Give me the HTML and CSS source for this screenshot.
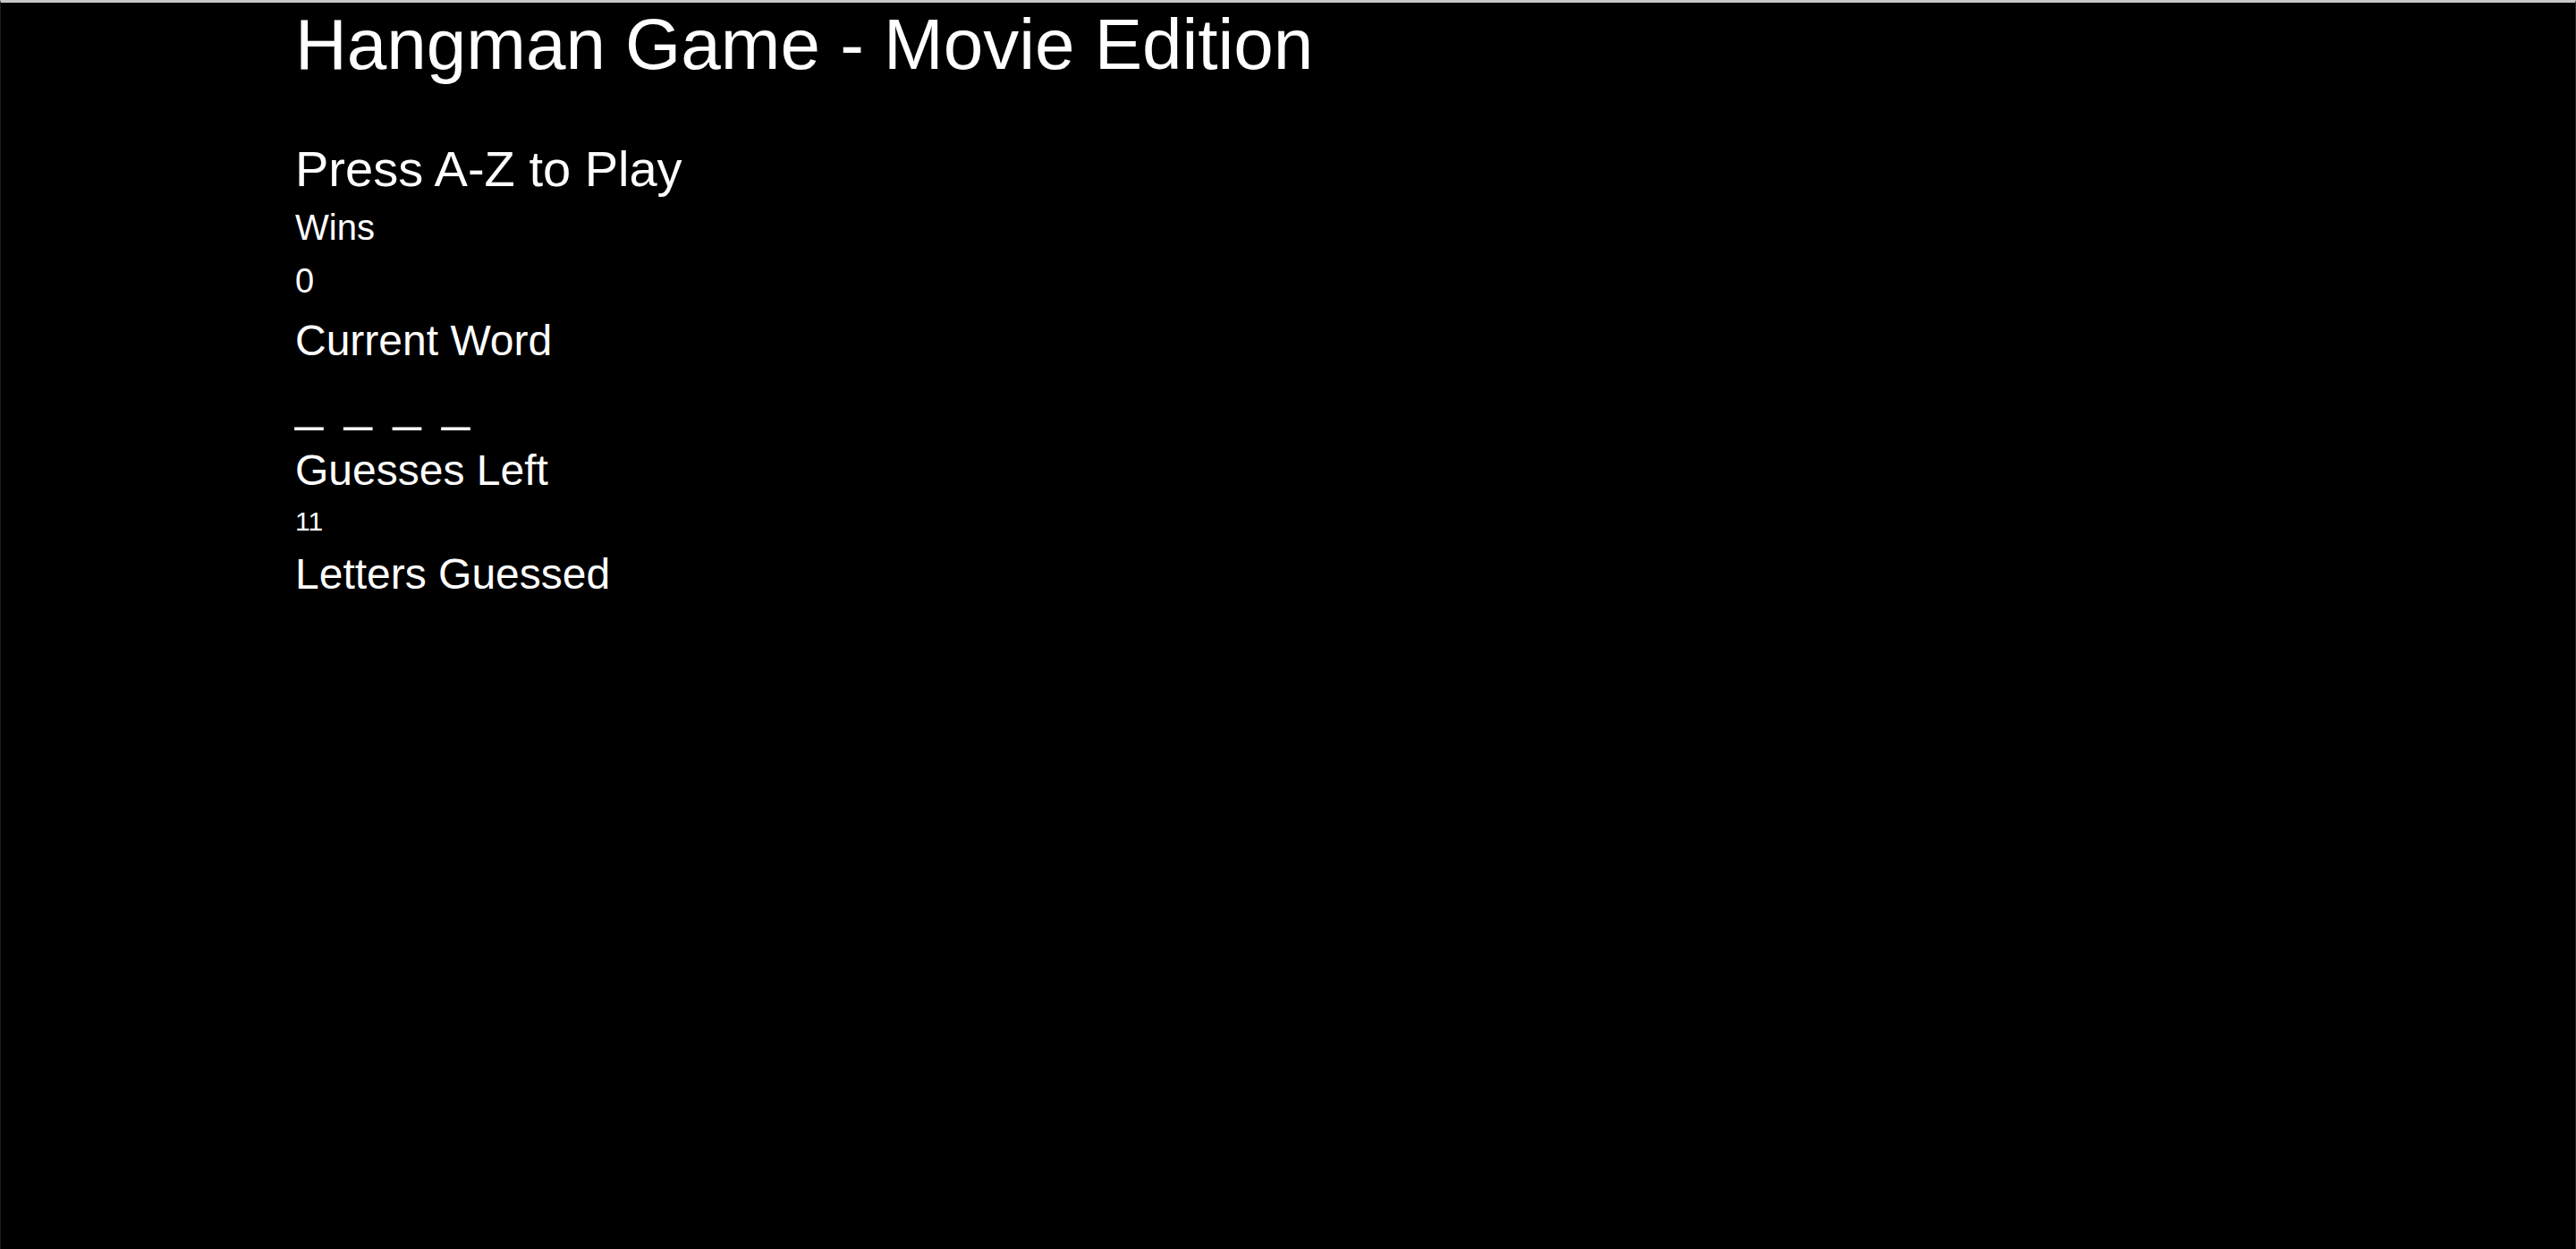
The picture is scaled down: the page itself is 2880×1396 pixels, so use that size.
FILE: index.html
```html
<!DOCTYPE html>
<html lang="en">
<head>
<meta charset="utf-8">
<title>Hangman Game - Movie Edition</title>
<link rel="stylesheet" href="styles.css">
</head>
<body>
  <main class="game">
    <h1 class="title">Hangman Game - Movie Edition</h1>
    <h2 class="prompt">Press A-Z to Play</h2>
    <div class="label-sm">Wins</div>
    <div class="value-wins">0</div>
    <h3 class="label label-current">Current Word</h3>
    <div class="word">_ _ _ _</div>
    <h3 class="label label-guesses">Guesses Left</h3>
    <div class="value-left">11</div>
    <h3 class="label label-letters">Letters Guessed</h3>
  </main>
</body>
</html>
```

FILE: styles.css
```css
html, body {
  height: 100%;
}
body {
  margin: 0;
  background: #000;
  color: #fff;
  font-family: "Liberation Sans", Arial, Helvetica, sans-serif;
  border-top: 3px solid #c8c8c8;
  border-left: 1px solid #1c1c1c;
  border-right: 1px solid #2a2a2a;
  box-sizing: border-box;
}
.game {
  padding-left: 329px;
  display: flex;
  flex-direction: column;
  align-items: flex-start;
}
.game > * {
  margin: 0;
  font-weight: normal;
  line-height: 1;
}
.title {
  font-size: 80px;
  margin-top: 7px;
}
.prompt {
  font-size: 56px;
  margin-top: 71px;
}
.label-sm {
  font-size: 40px;
  margin-top: 17px;
}
.value-wins {
  font-size: 38px;
  margin-top: 21px;
}
.label {
  font-size: 48px;
}
.label-current {
  margin-top: 24px;
}
.word {
  font-size: 56px;
  margin-top: 18px;
  word-spacing: 8px;
}
.label-guesses {
  margin-top: 23px;
}
.value-left {
  font-size: 30px;
  margin-top: 18px;
}
.label-letters {
  margin-top: 20px;
}
```
